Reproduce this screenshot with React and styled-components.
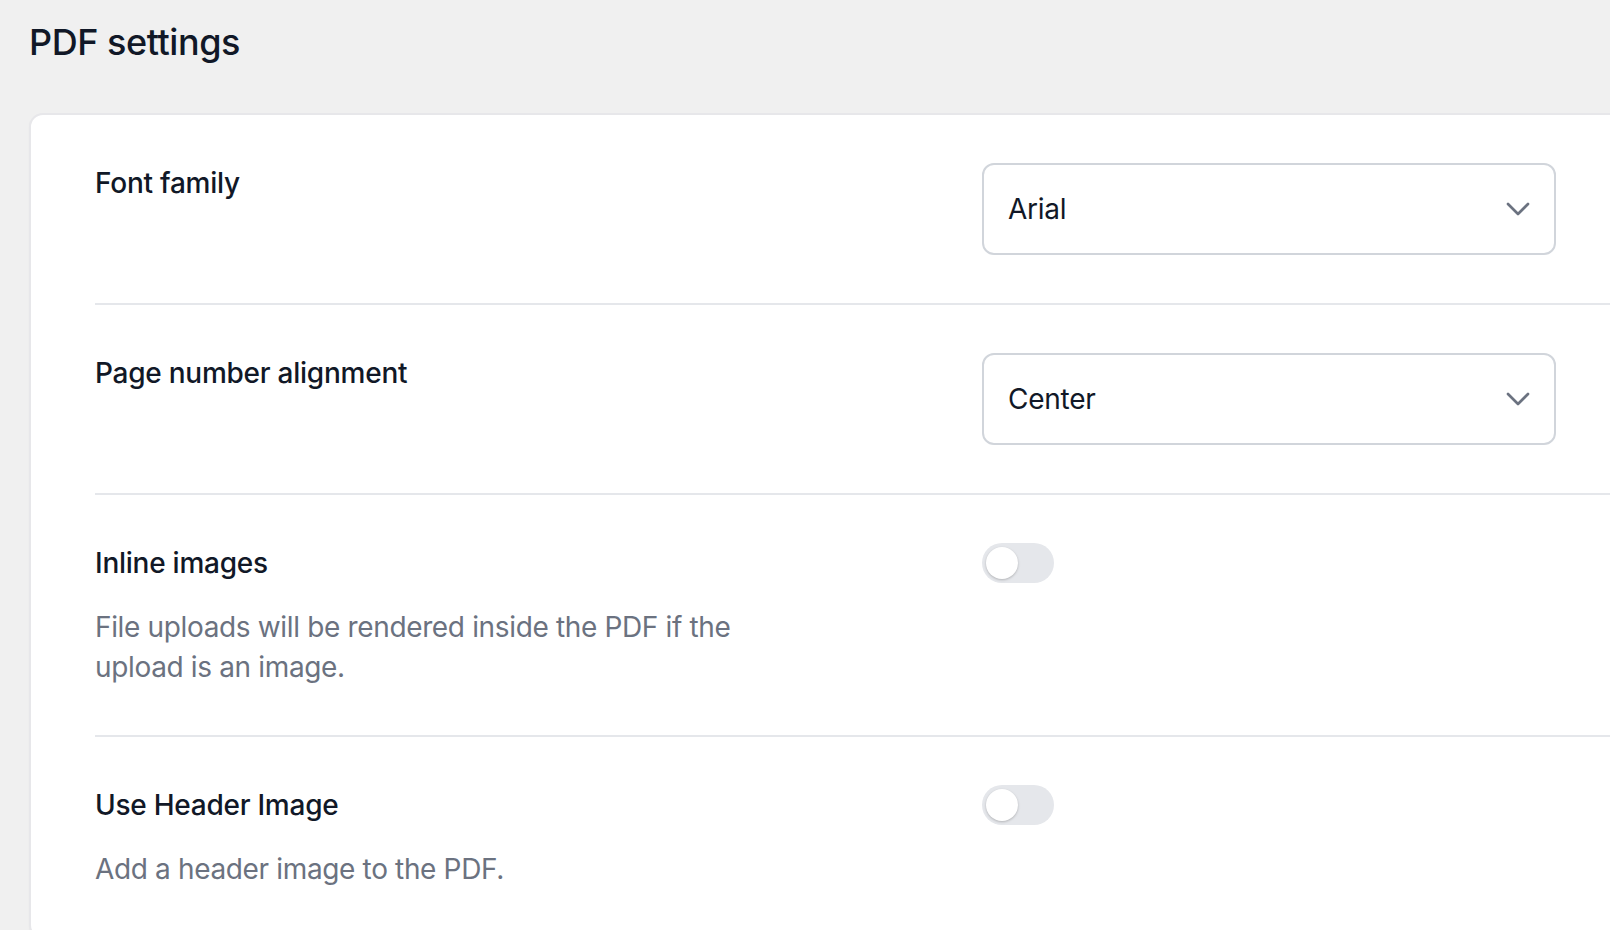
import React, { useState } from "react";
import styled, { createGlobalStyle } from "styled-components";

const GlobalStyle = createGlobalStyle`
  html, body {
    margin: 0;
    padding: 0;
    background: #f0f0f0;
    overflow: hidden;
  }
  body {
    font-family: Inter, "Noto Sans", "Liberation Sans", sans-serif;
    color: #111827;
    -webkit-font-smoothing: antialiased;
  }
  * {
    box-sizing: border-box;
  }
`;

const settings = [
  {
    id: "font",
    label: "Font family",
    type: "select",
    value: "Arial",
    options: ["Arial", "Helvetica", "Times New Roman", "Courier"],
  },
  {
    id: "align",
    label: "Page number alignment",
    type: "select",
    value: "Center",
    options: ["Left", "Center", "Right"],
  },
  {
    id: "inline",
    label: "Inline images",
    type: "toggle",
    value: false,
    description: "File uploads will be rendered inside the PDF if the upload is an image.",
  },
  {
    id: "header",
    label: "Use Header Image",
    type: "toggle",
    value: false,
    description: "Add a header image to the PDF.",
  },
];

function ChevronDown() {
  return (
    <svg width="40" height="40" viewBox="0 0 24 24" fill="none" stroke="#6b7280" strokeWidth="1.6" strokeLinecap="round" strokeLinejoin="round">
      <path d="m6 9 6 6 6-6" />
    </svg>
  );
}

function SettingRow({ item }) {
  const [value, setValue] = useState(item.value);

  return (
    <Row>
      <LabelCol>
        <Label>{item.label}</Label>
        {item.description && <Description>{item.description}</Description>}
      </LabelCol>
      <ControlCol>
        {item.type === "select" ? (
          <SelectWrap>
            <Select value={value} onChange={(e) => setValue(e.target.value)}>
              {item.options.map((o) => (
                <option key={o}>{o}</option>
              ))}
            </Select>
            <ChevronSlot>
              <ChevronDown />
            </ChevronSlot>
          </SelectWrap>
        ) : (
          <Toggle $on={value} onClick={() => setValue(!value)}>
            <Knob $on={value} />
          </Toggle>
        )}
      </ControlCol>
    </Row>
  );
}

export default function App() {
  return (
    <Page>
      <GlobalStyle />
      <Title>PDF settings</Title>
      <Card>
        {settings.map((item) => (
          <SettingRow key={item.id} item={item} />
        ))}
      </Card>
    </Page>
  );
}

const Page = styled.div`
  padding: 14px 0 0 29px;
  width: 1610px;
  height: 930px;
`;

const Title = styled.h1`
  margin: 0 0 43px 0;
  font-size: 36px;
  line-height: 56px;
  font-weight: 500;
  color: #111827;
  letter-spacing: -0.45px;
`;

const Card = styled.div`
  width: 1800px;
  background: #ffffff;
  border: 2px solid #e7e7ea;
  border-radius: 14px;
  padding: 0 0 0 64px;
  box-shadow: 0 1px 2px rgba(0, 0, 0, 0.03);
`;

const Row = styled.div`
  display: grid;
  grid-template-columns: 887px 574px;
  padding: 48px 0;
  border-bottom: 2px solid #e5e7eb;

  &:last-child {
    border-bottom: none;
  }
`;

const LabelCol = styled.div`
  display: flex;
  flex-direction: column;
  gap: 24px;
`;

const Label = styled.div`
  font-size: 28px;
  line-height: 40px;
  font-weight: 500;
  color: #111827;
  letter-spacing: -0.25px;
`;

const Description = styled.p`
  margin: 0;
  max-width: 680px;
  font-size: 28px;
  line-height: 40px;
  color: #6b7280;
  letter-spacing: -0.35px;
`;

const ControlCol = styled.div`
  display: flex;
  align-items: flex-start;
`;

const SelectWrap = styled.div`
  position: relative;
  width: 100%;
`;

const Select = styled.select`
  appearance: none;
  width: 100%;
  height: 92px;
  padding: 0 80px 0 24px;
  border: 2px solid #d1d5db;
  border-radius: 12px;
  background: #ffffff;
  font-family: inherit;
  font-size: 28px;
  letter-spacing: -0.25px;
  color: #111827;
  outline: none;
`;

const ChevronSlot = styled.span`
  position: absolute;
  right: 18px;
  top: 50%;
  transform: translateY(-50%);
  display: flex;
  pointer-events: none;
`;

const Toggle = styled.button`
  position: relative;
  width: 72px;
  height: 40px;
  border: none;
  padding: 0;
  border-radius: 999px;
  background: ${(p) => (p.$on ? "#4f46e5" : "#e5e7eb")};
  cursor: pointer;
`;

const Knob = styled.span`
  position: absolute;
  top: 4px;
  left: ${(p) => (p.$on ? "36px" : "4px")};
  width: 32px;
  height: 32px;
  border-radius: 50%;
  background: #ffffff;
  box-shadow: 0 1px 3px rgba(0, 0, 0, 0.15), 0 1px 2px rgba(0, 0, 0, 0.08);
  transition: left 0.2s;
`;
